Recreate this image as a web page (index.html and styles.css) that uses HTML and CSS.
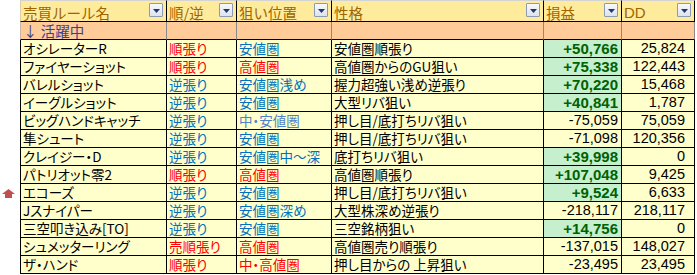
FILE: index.html
```html
<!DOCTYPE html>
<html lang="ja">
<head>
<meta charset="utf-8">
<title>売買ルール一覧</title>
<link rel="stylesheet" href="styles.css">
</head>
<body>
<table class="sheet">
  <colgroup>
    <col class="w-gut"><col class="w-name"><col class="w-dir"><col class="w-pos"><col class="w-char"><col class="w-pl"><col class="w-dd">
  </colgroup>
  <thead>
    <tr class="head">
      <th class="gut"></th>
      <th class="first"><div class="hd"><span class="ht">売買ルール名</span><span class="dd"><svg viewBox="0 0 7 4" width="7" height="4"><polygon points="0,0 7,0 3.5,4" fill="#1f3a6e"/></svg></span></div></th>
      <th><div class="hd"><span class="ht">順/逆</span><span class="dd"><svg viewBox="0 0 7 4" width="7" height="4"><polygon points="0,0 7,0 3.5,4" fill="#1f3a6e"/></svg></span></div></th>
      <th><div class="hd"><span class="ht">狙い位置</span><span class="dd"><svg viewBox="0 0 7 4" width="7" height="4"><polygon points="0,0 7,0 3.5,4" fill="#1f3a6e"/></svg></span></div></th>
      <th><div class="hd"><span class="ht">性格</span><span class="dd"><svg viewBox="0 0 7 4" width="7" height="4"><polygon points="0,0 7,0 3.5,4" fill="#1f3a6e"/></svg></span></div></th>
      <th><div class="hd"><span class="ht">損益</span><span class="dd"><svg viewBox="0 0 7 4" width="7" height="4"><polygon points="0,0 7,0 3.5,4" fill="#1f3a6e"/></svg></span></div></th>
      <th><div class="hd"><span class="ht latin">DD</span><span class="dd"><svg viewBox="0 0 7 4" width="7" height="4"><polygon points="0,0 7,0 3.5,4" fill="#1f3a6e"/></svg></span></div></th>
    </tr>
  </thead>
  <tbody>
    <tr class="section">
      <td class="gut"></td>
      <td class="first">↓ 活躍中</td><td></td><td></td><td></td><td></td><td></td>
    </tr>
    <tr><td class="gut"></td><td class="first">オシレーターR</td><td class="dir red">順張り</td><td class="blue">安値圏</td><td>安値圏順張り</td><td class="num pl good">+50,766</td><td class="num ddv">25,824</td></tr>
    <tr><td class="gut"></td><td class="first">ファイヤーショット</td><td class="dir red">順張り</td><td class="red">高値圏</td><td>高値圏からのGU狙い</td><td class="num pl good">+75,338</td><td class="num ddv">122,443</td></tr>
    <tr><td class="gut"></td><td class="first">バレルショット</td><td class="dir blue">逆張り</td><td class="blue">安値圏浅め</td><td>握力超強い浅め逆張り</td><td class="num pl good">+70,220</td><td class="num ddv">15,468</td></tr>
    <tr><td class="gut"></td><td class="first">イーグルショット</td><td class="dir blue">逆張り</td><td class="blue">安値圏</td><td>大型リバ狙い</td><td class="num pl good">+40,841</td><td class="num ddv">1,787</td></tr>
    <tr><td class="gut"></td><td class="first">ビッグハンドキャッチ</td><td class="dir blue">逆張り</td><td class="lblue">中・安値圏</td><td>押し目/底打ちリバ狙い</td><td class="num pl">-75,059</td><td class="num ddv">75,059</td></tr>
    <tr><td class="gut"></td><td class="first">隼シュート</td><td class="dir blue">逆張り</td><td class="blue">安値圏</td><td>押し目/底打ちリバ狙い</td><td class="num pl">-71,098</td><td class="num ddv">120,356</td></tr>
    <tr><td class="gut"></td><td class="first">クレイジー・D</td><td class="dir blue">逆張り</td><td class="blue">安値圏中～深</td><td>底打ちリバ狙い</td><td class="num pl good">+39,998</td><td class="num ddv">0</td></tr>
    <tr><td class="gut"></td><td class="first">パトリオット零2</td><td class="dir red">順張り</td><td class="red">高値圏</td><td>高値圏順張り</td><td class="num pl good">+107,048</td><td class="num ddv">9,425</td></tr>
    <tr><td class="gut"><svg class="up" viewBox="0 0 13 9" width="13" height="9"><polygon points="6.5,0 13,5 10,5 10,9 3,9 3,5 0,5" fill="#c0504d"/></svg></td><td class="first">エコーズ</td><td class="dir blue">逆張り</td><td class="blue">安値圏</td><td>押し目/底打ちリバ狙い</td><td class="num pl good">+9,524</td><td class="num ddv">6,633</td></tr>
    <tr><td class="gut"></td><td class="first">Jスナイパー</td><td class="dir blue">逆張り</td><td class="blue">安値圏深め</td><td>大型株深め逆張り</td><td class="num pl">-218,117</td><td class="num ddv">218,117</td></tr>
    <tr><td class="gut"></td><td class="first">三空叩き込み[TO]</td><td class="dir blue">逆張り</td><td class="blue">安値圏</td><td>三空銘柄狙い</td><td class="num pl good">+14,756</td><td class="num ddv">0</td></tr>
    <tr><td class="gut"></td><td class="first">シュメッターリング</td><td class="dir red">売順張り</td><td class="red">高値圏</td><td>高値圏売り順張り</td><td class="num pl">-137,015</td><td class="num ddv">148,027</td></tr>
    <tr><td class="gut"></td><td class="first">ザ・ハンド</td><td class="dir red">順張り</td><td class="red">中・高値圏</td><td>押し目からの 上昇狙い</td><td class="num pl">-23,495</td><td class="num ddv">23,495</td></tr>
  </tbody>
</table>
</body>
</html>
```

FILE: styles.css
```css
html, body {
  margin: 0;
  padding: 0;
  background: #ffffff;
}

body {
  font-family: "Noto Sans CJK JP", "Noto Sans", sans-serif;
  font-size: 13.5px;
  color: #000000;
}

.sheet {
  border-collapse: separate;
  border-spacing: 0;
  table-layout: fixed;
  width: 695px;
}

.w-gut { width: 20px; }
.w-name { width: 147px; }
.w-dir { width: 70px; }
.w-pos { width: 95px; }
.w-char { width: 212px; }
.w-pl { width: 78px; }
.w-dd { width: 73px; }

.sheet th,
.sheet td {
  padding: 0 0 0 2px;
  white-space: nowrap;
  font-weight: normal;
  text-align: left;
  vertical-align: middle;
  line-height: 17px;
  border-right: 1px solid #000000;
  border-bottom: 1px solid #000000;
}

tbody td {
  font-feature-settings: "palt";
}

.sheet .gut {
  padding: 0;
  border: none;
  background: #ffffff;
  text-align: center;
  vertical-align: middle;
}

.up {
  display: block;
  margin: 0 0 0 2px;
}

/* header */
.head {
  height: 22px;
}

.head th {
  background: #ffeb9c;
  color: #9c6500;
  border-top: 1px solid #d4d4d4;
  padding: 0;
  vertical-align: top;
  font-size: 14.5px;
}

.head th.first {
  border-left: 1px solid #d8d0a8;
}

.hd {
  display: flex;
  align-items: flex-start;
  height: 20px;
}

.ht {
  padding: 3px 0 0 2px;
  line-height: 17px;
}

.ht.latin {
  font-family: "Liberation Sans", "Noto Sans", sans-serif;
  font-size: 15px;
}

.dd {
  margin: 2px 3px 0 auto;
  flex: none;
  width: 14px;
  height: 14px;
  box-sizing: border-box;
  border: 1px solid #8c9bb3;
  border-radius: 1px;
  background: linear-gradient(#f8f9fb, #dde3ed);
  display: flex;
  align-items: center;
  justify-content: center;
}

.dd svg {
  display: block;
  margin-top: 1px;
}

/* section row */
.section {
  height: 18px;
}

.section td {
  background: #ffcc99;
  color: #3f3f8f;
  border-right-color: #8a8a8a;
  font-size: 14.5px;
  font-feature-settings: normal;
}

.section td.first {
  border-left: 1px solid #c8b8a8;
}

/* data rows */
tbody tr {
  height: 18px;
}

tbody td {
  background: #ffffcc;
}

tbody td.first {
  border-left: 1px solid #000000;
}

.dir {
  padding-left: 3px;
}

.red { color: #ff0000; }
.blue { color: #0070c0; }
.lblue { color: #4f81c8; }

.num {
  font-family: "Liberation Sans", "Noto Sans", sans-serif;
  font-size: 14.5px;
  text-align: right;
}

.sheet td.pl {
  padding-right: 3px;
  text-align: right;
}

.sheet td.ddv {
  padding-right: 9px;
  text-align: right;
}

.sheet td.good {
  background: #c6efce;
  color: #006100;
  font-weight: bold;
  font-size: 15px;
}
```
